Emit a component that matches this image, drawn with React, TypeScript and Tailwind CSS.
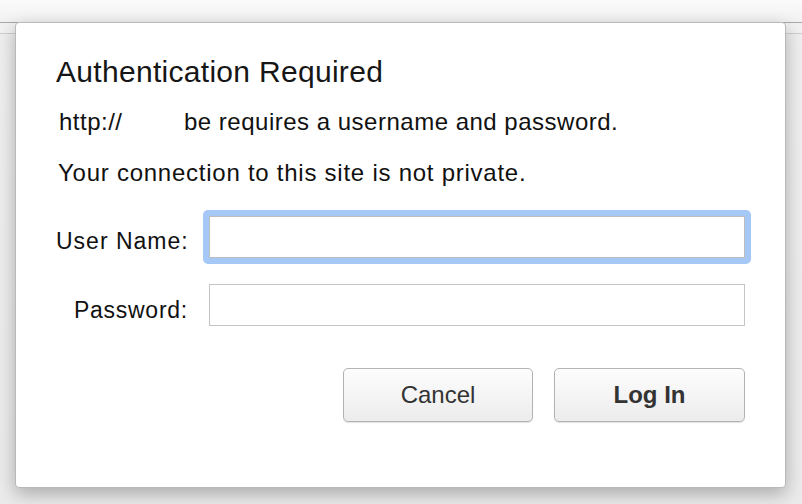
export default function App() {
  return (
    <div className="relative h-[504px] w-[802px] overflow-hidden bg-[#ebebeb] font-['Liberation_Sans',Arial,sans-serif] text-[#111]">
      {/* browser chrome behind the dialog */}
      <div className="h-[23px] border-b border-[#a9a9a9] bg-gradient-to-b from-[#fbfbfb] to-[#f1f1f1]" />
      <div className="h-[11px] border-b border-[#cfcfcf] bg-[#f2f2f2]" />
      <div className="h-[470px] bg-gradient-to-b from-[#efefef] to-[#ebebeb]" />

      {/* auth dialog */}
      <div className="absolute left-[15px] top-[22px] h-[466px] w-[771px] rounded-[4px] border border-[#b9b9b9] bg-white pl-[40px] pr-[40px] pt-[34px] shadow-[0_6px_18px_rgba(0,0,0,0.28)]">
        <h1 className="text-[30px] leading-[30px] tracking-[0.3px] text-[#161616]">
          Authentication Required
        </h1>

        <p className="mt-[23px] flex text-[24px] leading-[24px] tracking-[0.5px]">
          <span className="ml-[3px] w-[125px]">http://</span>
          <span>be requires a username and password.</span>
        </p>

        <p className="mt-[27px] ml-[2px] text-[24px] leading-[24px] tracking-[0.75px]">
          Your connection to this site is not private.
        </p>

        <div className="mt-[25px] flex items-start">
          <label className="mt-[20px] w-[132px] shrink-0 whitespace-nowrap text-right text-[23px] leading-[23px] tracking-[1px]">
            User Name:
          </label>
          <div className="ml-[15px] shrink-0 rounded-[5px] bg-[#a6c8f6] p-[6px]">
            <input
              type="text"
              className="block h-[42px] w-[536px] border border-[#bdbdbd] bg-white px-2 text-[20px] outline-none"
            />
          </div>
        </div>

        <div className="mt-[20px] flex items-start">
          <label className="mt-[15px] w-[132px] shrink-0 whitespace-nowrap text-right text-[23px] leading-[23px] tracking-[0.75px]">
            Password:
          </label>
          <input
            type="password"
            className="ml-[21px] block h-[42px] w-[536px] shrink-0 border border-[#c4c4c4] bg-white px-2 text-[20px] outline-none"
          />
        </div>

        <div className="mt-[42px] flex justify-end gap-[21px]">
          <button className="h-[54px] w-[190px] rounded-[5px] border border-[#b3b3b3] bg-gradient-to-b from-[#fdfdfd] to-[#ececec] text-[24px] text-[#333] shadow-[0_1px_1px_rgba(0,0,0,0.12)]">
            Cancel
          </button>
          <button className="h-[54px] w-[191px] rounded-[5px] border border-[#b3b3b3] bg-gradient-to-b from-[#fdfdfd] to-[#ececec] text-[24px] font-bold text-[#333] shadow-[0_1px_1px_rgba(0,0,0,0.12)]">
            Log In
          </button>
        </div>
      </div>
    </div>
  );
}
